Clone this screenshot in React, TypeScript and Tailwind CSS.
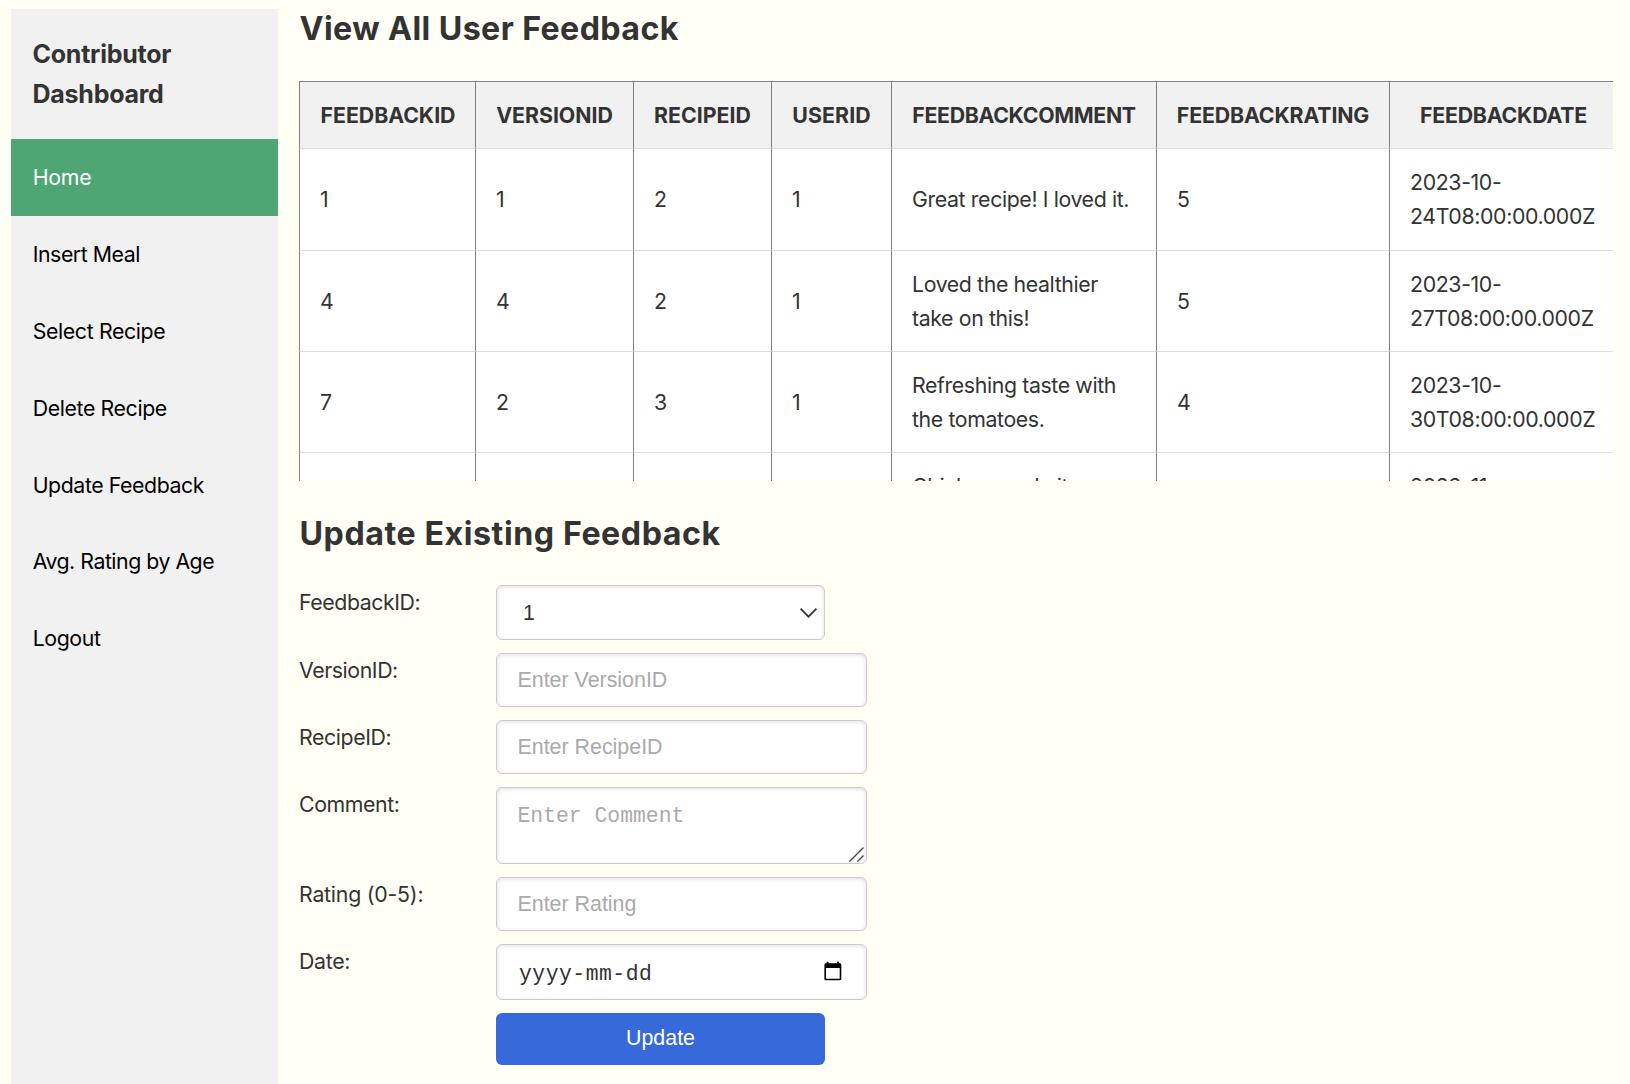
import type { ReactNode } from "react";

const nav = [
  { label: "Home", tracking: "tracking-[-0.25px]" },
  { label: "Insert Meal", tracking: "tracking-[-0.45px]" },
  { label: "Select Recipe", tracking: "tracking-[-0.37px]" },
  { label: "Delete Recipe", tracking: "tracking-[-0.38px]" },
  { label: "Update Feedback", tracking: "tracking-[-0.42px]" },
  { label: "Avg. Rating by Age", tracking: "tracking-[-0.48px]" },
  { label: "Logout", tracking: "tracking-[-0.4px]" },
];

const columns = [
  { name: "FEEDBACKID", width: "w-[176px]", tracking: "tracking-[-0.05px] pl-px" },
  { name: "VERSIONID", width: "w-[158px]", tracking: "" },
  { name: "RECIPEID", width: "w-[138px]", tracking: "" },
  { name: "USERID", width: "w-[120px]", tracking: "tracking-[0.1px]" },
  { name: "FEEDBACKCOMMENT", width: "w-[265px]", tracking: "tracking-[-0.32px]" },
  { name: "FEEDBACKRATING", width: "w-[233px]", tracking: "tracking-[-0.14px]" },
  { name: "FEEDBACKDATE", width: "w-[224px]", tracking: "tracking-[-0.2px] pl-1" },
];

const rows = [
  { cells: ["1", "1", "2", "1"], comment: ["Great recipe! I loved it."], rating: "5", date: ["2023-10-", "24T08:00:00.000Z"], height: "h-[102px]", pad: "pb-0.5" },
  { cells: ["4", "4", "2", "1"], comment: ["Loved the healthier", "take on this!"], rating: "5", date: ["2023-10-", "27T08:00:00.000Z"], height: "h-[101px]", pad: "" },
  { cells: ["7", "2", "3", "1"], comment: ["Refreshing taste with", "the tomatoes."], rating: "4", date: ["2023-10-", "30T08:00:00.000Z"], height: "h-[101px]", pad: "" },
];

const cutRow = { comment: ["Chicken made it", "even better."], date: ["2023-11-", "02T08:00:00.000Z"] };

const box =
  "block rounded-[6px] border border-[#cccccc] bg-white shadow-[inset_0_1px_4px_#dddddd] outline-none";
const field =
  box + " w-[371px] pr-5 pl-[20.5px] text-[21.4px] text-[#333333] placeholder:text-[#aaaaaa] placeholder:opacity-100";

function Cell({ pad = "", children }: { pad?: string; children?: ReactNode }) {
  return (
    <td className="border-b border-l border-b-[#dddddd] border-l-[#808080] bg-white py-0 pr-0 pl-5 align-middle">
      <div className={pad}>{children}</div>
    </td>
  );
}

function Lines({ lines }: { lines: string[] }) {
  return (
    <>
      {lines.map((l) => (
        <div key={l} className="whitespace-nowrap">
          {l}
        </div>
      ))}
    </>
  );
}

function Row({ label, tracking = "", children }: { label: string; tracking?: string; children: ReactNode }) {
  return (
    <div className="flex items-start">
      <label className={"w-[197px] shrink-0 leading-[34px] " + tracking}>{label}</label>
      {children}
    </div>
  );
}

export default function App() {
  return (
    <div className="flex h-[1084px] w-[1630px] overflow-hidden bg-[#fffff6] pt-[9px] pl-[11px] font-['Inter',sans-serif] text-[21.3px] text-[#333333]">
      <aside className="w-[267px] shrink-0 bg-[#f1f1f1]">
        <h3 className="h-[130px] pt-[25px] pl-[21.5px] text-[25px] leading-[40px] font-bold tracking-[-0.25px]">
          Contributor
          <br />
          Dashboard
        </h3>
        <nav>
          {nav.map((n, i) => (
            <a
              key={n.label}
              className={
                "flex h-[76.8px] items-center pt-0.5 pl-[21.7px] " +
                n.tracking +
                (i === 0 ? " bg-[#4ea674] text-white" : " text-black")
              }
            >
              {n.label}
            </a>
          ))}
        </nav>
      </aside>

      <main className="ml-[21px] w-[1314px] shrink-0">
        <h2 className="mb-8 pl-[0.5px] text-[32.2px] leading-[40px] font-bold tracking-[0.4px]">
          View All User Feedback
        </h2>

        <div className="h-[400px] overflow-hidden">
          <table className="w-[1314px] table-fixed border-separate border-spacing-0 leading-[34px]">
            <thead>
              <tr className="h-[68px]">
                {columns.map((c) => (
                  <th
                    key={c.name}
                    className={
                      "border-t border-b border-l border-t-[#808080] border-b-[#dddddd] border-l-[#808080] bg-[#f1f1f1] py-0 pr-0 text-center font-bold " +
                      c.width +
                      " " +
                      c.tracking
                    }
                  >
                    {c.name}
                  </th>
                ))}
              </tr>
            </thead>
            <tbody>
              {rows.map((r) => (
                <tr key={r.cells[0]} className={r.height}>
                  {r.cells.map((c, i) => (
                    <Cell key={i} pad={r.pad}>
                      {c}
                    </Cell>
                  ))}
                  <Cell pad={r.pad + " tracking-[-0.38px]"}>
                    <Lines lines={r.comment} />
                  </Cell>
                  <Cell pad={r.pad}>{r.rating}</Cell>
                  <Cell pad={r.pad + " tracking-[-0.36px]"}>
                    <Lines lines={r.date} />
                  </Cell>
                </tr>
              ))}
              <tr className="h-[101px]">
                <Cell />
                <Cell />
                <Cell />
                <Cell />
                <Cell pad="tracking-[-0.38px]">
                  <Lines lines={cutRow.comment} />
                </Cell>
                <Cell />
                <Cell pad="tracking-[-0.36px]">
                  <Lines lines={cutRow.date} />
                </Cell>
              </tr>
            </tbody>
          </table>
        </div>

        <h2 className="mt-[33px] mb-[31px] pl-[0.5px] text-[32.2px] leading-[40px] font-bold tracking-[0.55px]">
          Update Existing Feedback
        </h2>

        <form className="flex flex-col gap-[13px]">
          <Row label="FeedbackID:" tracking="tracking-[-0.42px]">
            <div className={box + " flex h-[55px] w-[329px] items-center justify-between pr-[7px] pl-[26px] font-['Liberation_Sans',sans-serif] text-[21.4px]"}>
              <span className="pt-0.5">1</span>
              <svg width="17" height="10" viewBox="0 0 17 10" fill="none" stroke="#333333" strokeWidth="1.8">
                <path d="M0.6 0.7 8.5 8.7 16.4 0.7" />
              </svg>
            </div>
          </Row>
          <Row label="VersionID:" tracking="tracking-[-0.42px]">
            <input className={field + " h-[54px] font-['Liberation_Sans',sans-serif]"} placeholder="Enter VersionID" />
          </Row>
          <Row label="RecipeID:" tracking="tracking-[-0.4px]">
            <input className={field + " h-[54px] font-['Liberation_Sans',sans-serif]"} placeholder="Enter RecipeID" />
          </Row>
          <Row label="Comment:" tracking="tracking-[-0.4px]">
            <div className="relative">
              <textarea
                className={field + " h-[77px] resize-none pt-4 font-['Liberation_Mono',monospace] leading-6"}
                placeholder="Enter Comment"
              />
              <svg className="absolute right-[3px] bottom-[2px]" width="15" height="15" viewBox="0 0 15 15" fill="none" stroke="#444444" strokeWidth="1.4">
                <path d="M0.5 14.5 14.5 0.5M8.5 14.5 14.5 8.5" />
              </svg>
            </div>
          </Row>
          <Row label="Rating (0-5):" tracking="tracking-[-0.22px]">
            <input className={field + " h-[54px] font-['Liberation_Sans',sans-serif]"} placeholder="Enter Rating" />
          </Row>
          <Row label="Date:" tracking="tracking-[-0.3px]">
            <div className={box + " flex h-[56px] w-[371px] items-center justify-between pr-6 pl-[22px] font-['Liberation_Mono',monospace] text-[21.4px] tracking-[0.5px]"}>
              <span className="pt-1">yyyy-mm-dd</span>
              <svg className="mb-0.5" width="18" height="20" viewBox="0 0 18 20">
                <path
                  fill="#000000"
                  fillRule="evenodd"
                  d="M2.6 0.7h2v1.6h8.4V0.7h2v1.6h0.9a1.4 1.4 0 0 1 1.4 1.4v14.2a1.4 1.4 0 0 1-1.4 1.4H1.8a1.4 1.4 0 0 1-1.4-1.4V3.7a1.4 1.4 0 0 1 1.4-1.4h0.8zM2 7v10.7h13.7V7z"
                />
              </svg>
            </div>
          </Row>
          <Row label="">
            <button
              type="button"
              className="h-[52px] w-[329px] rounded-[6px] bg-[#3869da] pb-px font-['Liberation_Sans',sans-serif] text-[21.4px] text-white"
            >
              Update
            </button>
          </Row>
        </form>
      </main>
    </div>
  );
}
